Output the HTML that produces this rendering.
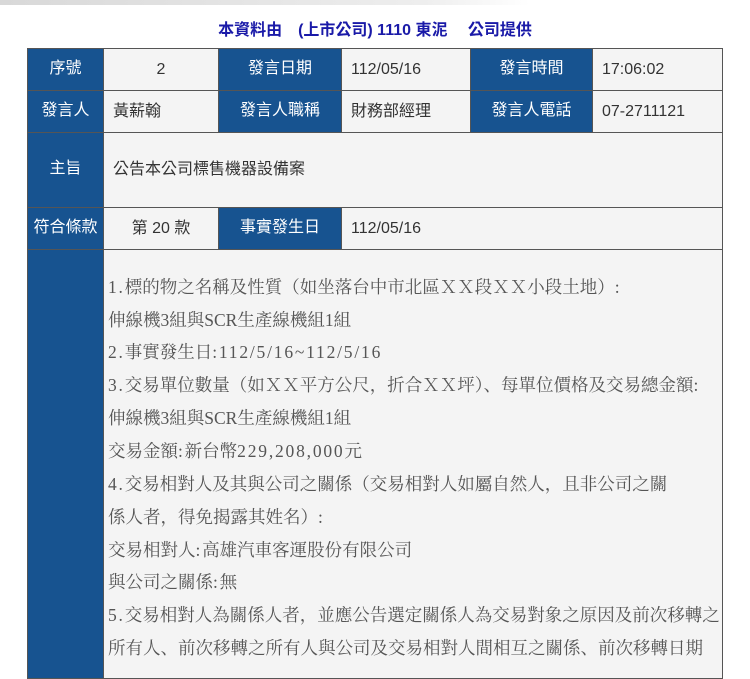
<!DOCTYPE html>
<html><head><meta charset="utf-8"><style>
*{margin:0;padding:0;box-sizing:border-box}
body{width:750px;height:666px;overflow:hidden;background:#fff;position:relative;font-family:"Liberation Sans","Noto Sans CJK TC",sans-serif}
.bar{position:absolute;left:0;top:0;width:530px;height:5px;background:linear-gradient(to right,#d8d8d8,#eee 80%,#fff)}
.title{position:absolute;top:16px;left:0;width:750px;text-align:center;color:#1a1aa8;font-weight:bold;font-size:16px;white-space:pre}
.c{position:absolute;border:1px solid #555;display:flex;align-items:center;font-size:16px;color:#333;background:#f4f4f4;padding-left:9px;white-space:nowrap;line-height:20px}
.h{background:#175390;color:#fff;justify-content:center;padding:0 0 2px 0}
.ctr{justify-content:center;padding:0}
.t{position:absolute;left:108px;font-family:"Liberation Serif","Noto Serif CJK SC",serif;font-size:17.5px;color:#555;white-space:nowrap;line-height:20px}
.m{letter-spacing:1.8px}
</style></head><body>
<div class="bar"></div>
<div class="title">本資料由　(上市公司) 1110 東泥　 公司提供</div>

<div class="c h" style="left:27px;top:48px;width:77px;height:43px">序號</div>
<div class="c ctr" style="left:103px;top:48px;width:116px;height:43px">2</div>
<div class="c h" style="left:218px;top:48px;width:124px;height:43px">發言日期</div>
<div class="c" style="left:341px;top:48px;width:130px;height:43px">112/05/16</div>
<div class="c h" style="left:470px;top:48px;width:123px;height:43px">發言時間</div>
<div class="c" style="left:592px;top:48px;width:131px;height:43px">17:06:02</div>

<div class="c h" style="left:27px;top:90px;width:77px;height:43px">發言人</div>
<div class="c" style="left:103px;top:90px;width:116px;height:43px">黃薪翰</div>
<div class="c h" style="left:218px;top:90px;width:124px;height:43px">發言人職稱</div>
<div class="c" style="left:341px;top:90px;width:130px;height:43px">財務部經理</div>
<div class="c h" style="left:470px;top:90px;width:123px;height:43px">發言人電話</div>
<div class="c" style="left:592px;top:90px;width:131px;height:43px">07-2711121</div>

<div class="c h" style="left:27px;top:132px;width:77px;height:76px">主旨</div>
<div class="c" style="left:103px;top:132px;width:620px;height:76px">公告本公司標售機器設備案</div>

<div class="c h" style="left:27px;top:207px;width:77px;height:43px">符合條款</div>
<div class="c ctr" style="left:103px;top:207px;width:116px;height:43px">第 20 款</div>
<div class="c h" style="left:218px;top:207px;width:124px;height:43px">事實發生日</div>
<div class="c" style="left:341px;top:207px;width:382px;height:43px">112/05/16</div>

<div class="c h" style="left:27px;top:249px;width:77px;height:430px"></div>
<div class="c" style="left:103px;top:249px;width:620px;height:430px"></div>

<div class="t" style="top:277px"><span class="m">1.</span>標的物之名稱及性質（如坐落台中市北區ＸＸ段ＸＸ小段土地）<span class="m">:</span></div>
<div class="t" style="top:310px">伸線機3組與SCR生產線機組1組</div>
<div class="t" style="top:342px"><span class="m">2.</span>事實發生日<span class="m">:112/5/16~112/5/16</span></div>
<div class="t" style="top:375px"><span class="m">3.</span>交易單位數量（如ＸＸ平方公尺，折合ＸＸ坪）、每單位價格及交易總金額<span class="m">:</span></div>
<div class="t" style="top:408px">伸線機3組與SCR生產線機組1組</div>
<div class="t" style="top:441px">交易金額<span class="m">:</span>新台幣<span class="m">229,208,000</span>元</div>
<div class="t" style="top:474px"><span class="m">4.</span>交易相對人及其與公司之關係（交易相對人如屬自然人，且非公司之關</div>
<div class="t" style="top:507px">係人者，得免揭露其姓名）<span class="m">:</span></div>
<div class="t" style="top:540px">交易相對人<span class="m">:</span>高雄汽車客運股份有限公司</div>
<div class="t" style="top:572px">與公司之關係<span class="m">:</span>無</div>
<div class="t" style="top:605px"><span class="m">5.</span>交易相對人為關係人者，並應公告選定關係人為交易對象之原因及前次移轉之</div>
<div class="t" style="top:638px">所有人、前次移轉之所有人與公司及交易相對人間相互之關係、前次移轉日期</div>
</body></html>
